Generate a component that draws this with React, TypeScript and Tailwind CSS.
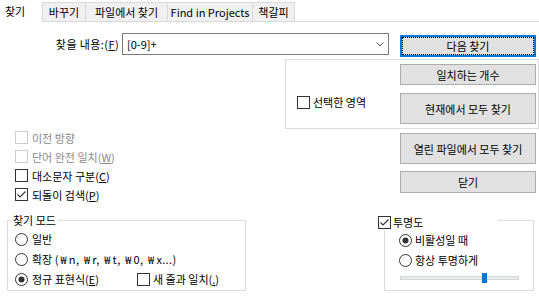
function Check({ checked, disabled }: { checked?: boolean; disabled?: boolean }) {
  return (
    <span
      className={`flex h-[13px] w-[13px] shrink-0 items-center justify-center border bg-white ${
        disabled ? 'border-[#cccccc]' : 'border-[#333333]'
      }`}
    >
      {checked ? (
        <svg width="11" height="11" viewBox="0 0 11 11">
          <path d="M1.5 5.5 L4 8 L9.5 2.5" fill="none" stroke="#333333" strokeWidth="1.1" />
        </svg>
      ) : null}
    </span>
  );
}

function Radio({ checked }: { checked?: boolean }) {
  return (
    <svg width="13" height="13" viewBox="0 0 13 13" className="shrink-0">
      <circle cx="6.5" cy="6.5" r="6" fill="#ffffff" stroke="#333333" strokeWidth="1" />
      {checked ? <circle cx="6.5" cy="6.5" r="3" fill="#333333" /> : null}
    </svg>
  );
}

function Btn({ children, className }: { children: React.ReactNode; className: string }) {
  return (
    <div className={`flex w-[136px] items-center justify-center border border-[#adadad] bg-[#e1e1e1] ${className}`}>
      {children}
    </div>
  );
}

// won sign is full width in the original font
function Won() {
  return <span className="inline-block w-[10px] text-center">₩</span>;
}

const tabs = [
  { label: '바꾸기', w: 'w-[43px]' },
  { label: '파일에서 찾기', w: 'w-[82px]' },
  { label: 'Find in Projects', w: 'w-[85px]' },
  { label: '책갈피', w: 'w-[43px] border-r' },
];

export default function App() {
  return (
    <div className="relative h-[302px] w-[539px] overflow-hidden bg-white text-[11px] leading-[16px] text-black font-['Noto_Sans_CJK_KR','Noto_Sans',sans-serif]">
      {/* tabs */}
      <div className="flex h-[22px] items-start">
        <div className="flex h-[22px] w-[42px] items-center bg-white pl-[5px]">찾기</div>
        {tabs.map((t) => (
          <div
            key={t.label}
            className={`mt-[2px] flex h-[20px] items-center justify-center border-t border-b border-l border-[#d9d9d9] bg-[#f0f0f0] ${t.w}`}
          >
            {t.label}
          </div>
        ))}
        <div className="h-[22px] flex-1 border-b border-[#d9d9d9]" />
      </div>

      {/* search row */}
      <div className="mt-[11px] flex items-start">
        <div className="flex h-[22px] w-[122px] items-center justify-end pr-[3px] tracking-[0.4px]">
          찾을 내용:(<span className="underline">F</span>)
        </div>
        <div className="flex h-[22px] w-[267px] items-center border border-[#7a7a7a] pl-[4px] pr-[4px]">
          <span className="flex-1">[0-9]+</span>
          <svg width="8" height="5" viewBox="0 0 8 5">
            <path d="M0.5 0.5 L4 4 L7.5 0.5" fill="none" stroke="#555555" strokeWidth="1" />
          </svg>
        </div>
        <div className="ml-[11px] mt-[2px] h-[22px] w-[136px] border-2 border-[#0078d7] bg-[#e1e1e1]">
          <div className="flex h-full w-full items-center justify-center border border-dotted border-black">
            다음 찾기
          </div>
        </div>
      </div>

      {/* selection group */}
      <div className="ml-[285px] mt-[2px] flex h-[70px] w-[254px] border border-[#dcdcdc]">
        <div className="w-[114px] pl-[11px] pt-[34px]">
          <div className="flex h-[16px] items-center gap-[3px]">
            <Check />
            <span>선택한 영역</span>
          </div>
        </div>
        <div className="flex flex-col pt-[4px]">
          <Btn className="h-[21px]">일치하는 개수</Btn>
          <Btn className="mt-[8px] h-[31px]">현재에서 모두 찾기</Btn>
        </div>
      </div>

      {/* options + buttons */}
      <div className="flex">
        <div className="-mt-px ml-[15px] flex flex-col">
          <div className="flex h-[19px] items-center gap-[4px] text-[#8a8a8a]">
            <Check disabled />
            <span>이전 방향</span>
          </div>
          <div className="flex h-[19px] items-center gap-[4px] text-[#8a8a8a]">
            <Check disabled />
            <span>
              단어 완전 일치(<span className="underline">W</span>)
            </span>
          </div>
          <div className="flex h-[19px] items-center gap-[4px]">
            <Check />
            <span>
              대소문자 구분(<span className="underline">C</span>)
            </span>
          </div>
          <div className="flex h-[19px] items-center gap-[4px]">
            <Check checked />
            <span>
              되돌이 검색(<span className="underline">P</span>)
            </span>
          </div>
        </div>
        <div className="ml-auto mr-[3px] flex flex-col pt-[4px]">
          <Btn className="h-[31px]">열린 파일에서 모두 찾기</Btn>
          <Btn className="mt-[7px] h-[22px]">닫기</Btn>
        </div>
      </div>

      {/* bottom groups */}
      <div className="mt-[16px] flex items-start">
        <div className="relative ml-[7px] h-[71px] w-[239px] border border-[#dcdcdc] pl-[7px] pt-[8px]">
          <div className="absolute left-[3px] top-[-9px] bg-white px-[2px]">찾기 모드</div>
          <div className="flex h-[20px] items-center gap-[4px]">
            <Radio />
            <span>일반</span>
          </div>
          <div className="flex h-[20px] items-center gap-[4px]">
            <Radio />
            <span>
              확장 <span className="tracking-[0.4px]">(<Won />n, <Won />r, <Won />t, <Won />0, <Won />x...)</span>
            </span>
          </div>
          <div className="flex h-[20px] items-center">
            <div className="flex w-[122px] items-center gap-[4px]">
              <Radio checked />
              <span>
                정규 표현식(<span className="underline">E</span>)
              </span>
            </div>
            <div className="flex items-center gap-[3px]">
              <Check />
              <span>
                새 줄과 일치(<span className="underline">.</span>)
              </span>
            </div>
          </div>
        </div>

        <div className="relative ml-[138px] h-[71px] w-[150px] border border-[#dcdcdc] pl-[14px] pt-[9px]">
          <div className="absolute left-[-7px] top-[-8px] flex h-[18px] w-[120px] items-center gap-[2px] bg-white">
            <Check checked />
            <span>투명도</span>
          </div>
          <div className="flex h-[20px] items-center gap-[3px]">
            <Radio checked />
            <span>비활성일 때</span>
          </div>
          <div className="flex h-[20px] items-center gap-[3px]">
            <Radio />
            <span>항상 투명하게</span>
          </div>
          <div className="relative ml-px mt-[6px] h-[4px] w-[119px] border border-[#d6d6d6] bg-[#e7eaea]">
            <div className="absolute left-[81px] top-[-4px] h-[10px] w-[5px] bg-[#0078d7]" />
          </div>
        </div>
      </div>
    </div>
  );
}
